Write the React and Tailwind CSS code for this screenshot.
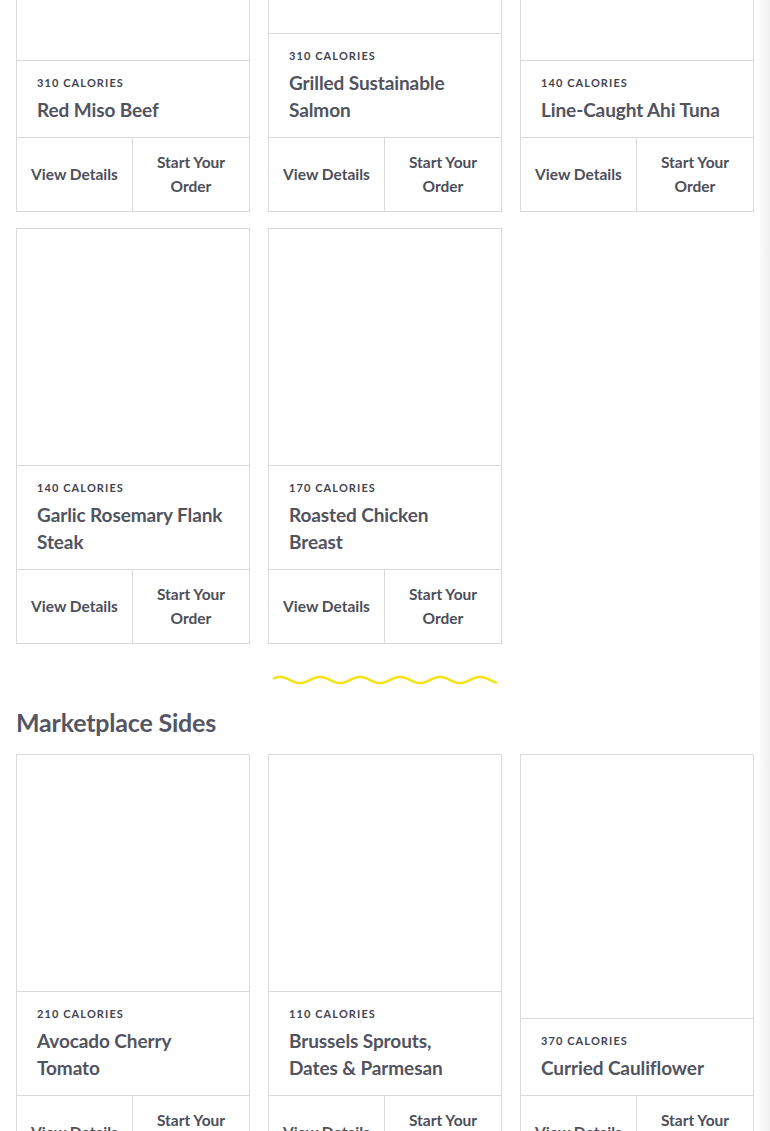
import React from "react";

const rows = [
  [
    { cal: 310, name: "Red Miso Beef" },
    { cal: 310, name: "Grilled Sustainable Salmon" },
    { cal: 140, name: "Line-Caught Ahi Tuna" },
  ],
  [
    { cal: 140, name: "Garlic Rosemary Flank Steak" },
    { cal: 170, name: "Roasted Chicken Breast" },
  ],
];

const sides = [
  { cal: 210, name: "Avocado Cherry Tomato" },
  { cal: 110, name: "Brussels Sprouts, Dates & Parmesan" },
  { cal: 370, name: "Curried Cauliflower" },
];

function Card({ cal, name }) {
  return (
    <div className="flex flex-col border border-[#dadada] bg-white">
      <div className="flex-1 min-h-[236px]" />
      <div className="border-t border-[#dadada] px-5 pt-[14px] pb-[14px]">
        <div className="text-[11px] leading-4 font-bold tracking-[0.1em] text-[#42444f] uppercase">
          {cal} Calories
        </div>
        <div className="mt-[5px] text-[19px] leading-[27px] font-bold tracking-[-0.1px] text-[#51545f]">
          {name}
        </div>
      </div>
      <div className="grid grid-cols-2 border-t border-[#dadada]">
        <button className="flex items-center justify-center border-r border-[#dadada] pt-3 pb-[13px] text-[15.5px] leading-6 font-bold text-[#4c4f5a]">
          View Details
        </button>
        <button className="flex items-center justify-center pt-3 pb-[13px] px-4 text-[15.5px] leading-6 font-bold text-[#4c4f5a] text-center">
          Start Your
          <br />
          Order
        </button>
      </div>
    </div>
  );
}

function Squiggle() {
  const pts = [];
  for (let x = 2; x <= 224; x += 1) {
    const y = 6 - 3 * Math.cos((2 * Math.PI * (x - 8)) / 40);
    pts.push(`${x},${y.toFixed(2)}`);
  }
  return (
    <svg width="226" height="12" viewBox="0 0 226 12" className="block">
      <polyline
        points={pts.join(" ")}
        fill="none"
        stroke="#f3e21a"
        strokeWidth="2.6"
        strokeLinecap="round"
        strokeLinejoin="round"
      />
    </svg>
  );
}

export default function App() {
  return (
    <div
      className="flex h-[1131px] w-[770px] overflow-hidden bg-white"
      style={{ fontFamily: "Lato, 'Open Sans', sans-serif" }}
    >
      <div className="w-[760px] pl-4 pr-[6px]">
        <div className="-mt-[204px] flex flex-col">
          <div className="flex flex-col gap-4">
            {rows.map((row, i) => (
              <div key={i} className="grid grid-cols-3 gap-x-[18px]">
                {row.map((c) => (
                  <Card key={c.name} {...c} />
                ))}
              </div>
            ))}
          </div>
          <div className="mt-[30px] flex justify-center">
            <Squiggle />
          </div>
          <h2 className="mt-5 text-[25px] leading-8 font-bold tracking-[-0.2px] text-[#545663]">
            Marketplace Sides
          </h2>
          <div className="mt-4 grid grid-cols-3 gap-x-[18px]">
            {sides.map((c) => (
              <Card key={c.name} {...c} />
            ))}
          </div>
        </div>
      </div>
      <div className="w-[10px] bg-gradient-to-r from-[#fbfbfb] to-[#f0f0f0]" />
    </div>
  );
}
